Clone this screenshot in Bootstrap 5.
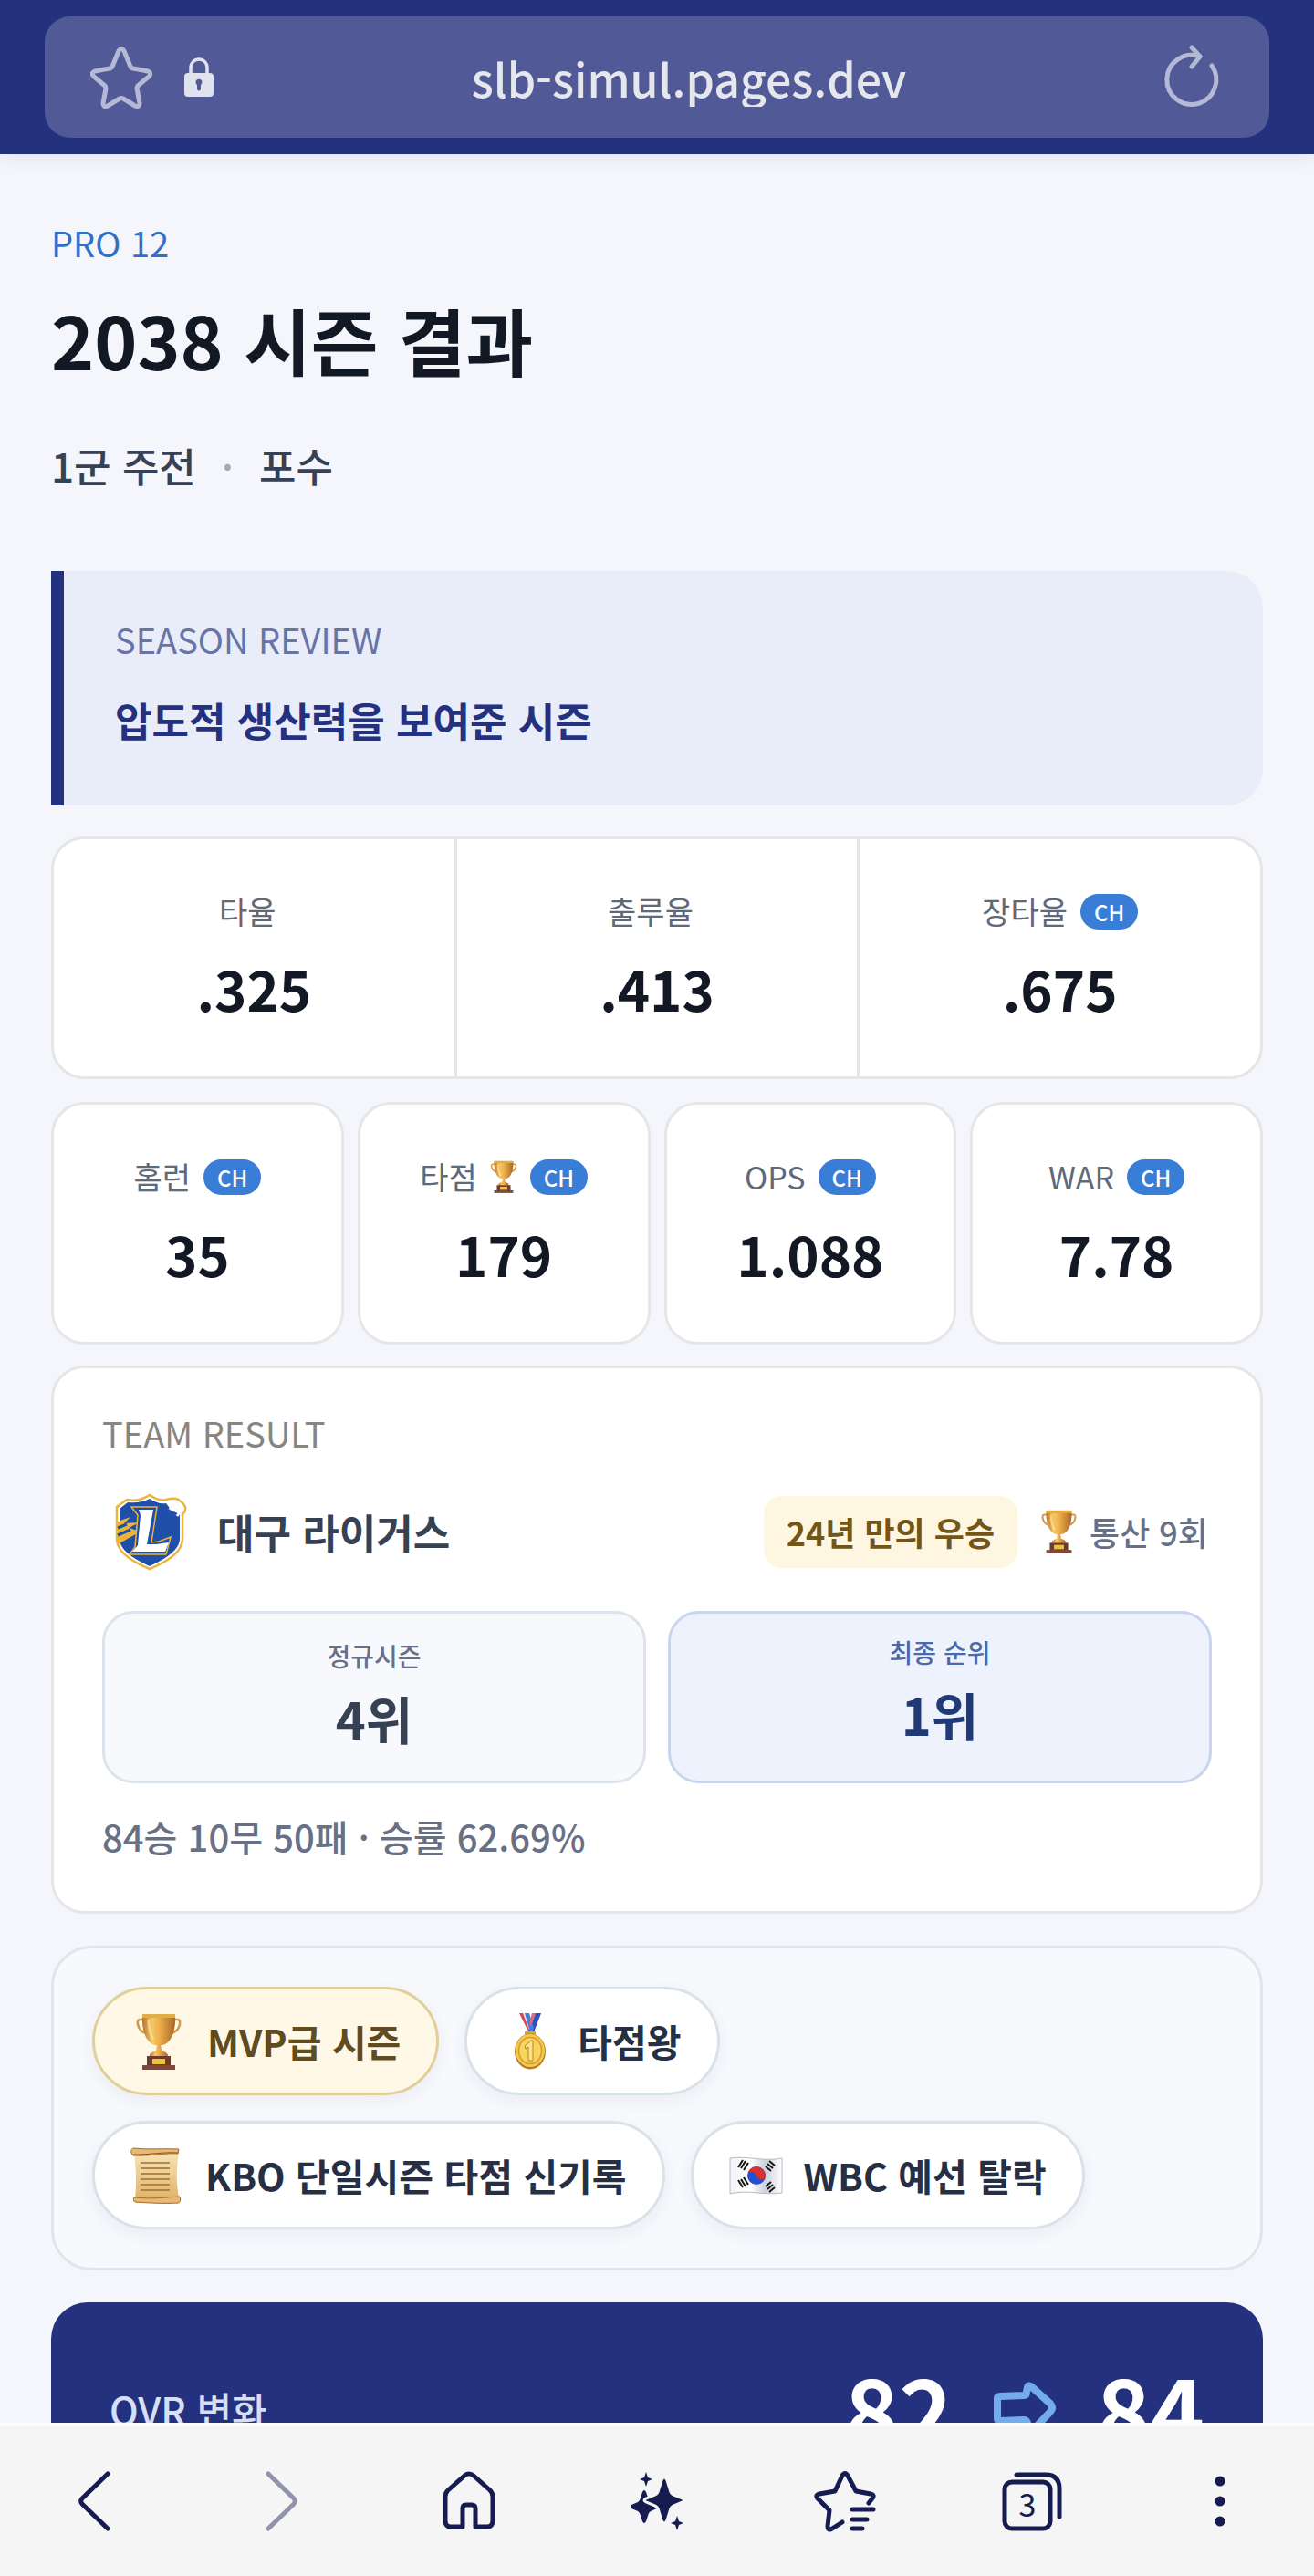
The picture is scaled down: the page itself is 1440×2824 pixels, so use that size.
<!DOCTYPE html>
<html lang="ko">
<head>
<meta charset="utf-8">
<meta name="viewport" content="width=device-width, initial-scale=1">
<title>2038 시즌 결과</title>
<link rel="stylesheet" href="https://cdn.jsdelivr.net/npm/bootstrap@5.3.0/dist/css/bootstrap.min.css">
<style>
:root{--navy:#24317e;--ink:#121824;--edge:#e5e6e7;--soft-edge:#dce3ea}
body{font-family:"Noto Sans CJK KR",sans-serif;background:#f4f6fb;color:var(--ink);overflow:hidden}
svg{display:block;flex:none}
.top-bar{background:var(--navy);padding:18px 49px;box-shadow:0 4px 24px rgba(0,0,0,.07);z-index:2}
.address{background:#515a97;border-radius:28px;height:133px;padding:0 52px 0 50px}
.lock{margin-left:34px}
.address input{background:none;border:0;color:#e6e7ec;font-size:50px;line-height:64px;font-weight:500;text-align:center;min-width:0;outline:0}
.icon-btn{background:none;border:0;padding:0}
.page-main{padding:69px 56px 0;min-height:0}
.kicker{font-size:38px;line-height:56px;color:#2f70c8}
.page-title{font-size:80px;line-height:104px;font-weight:700;margin:25px 0 0}
.role{font-size:44px;line-height:64px;font-weight:500;color:#374154;margin-top:55px;gap:28px}
.role .sep{color:#a3a9b6}
.review{background:#e9edfa;border-left:14px solid var(--navy);border-radius:0 40px 40px 0;padding:47px 56px 58px;margin-top:84px}
.eyebrow{font-size:38px;line-height:56px}
.review .eyebrow{color:#6874a6}
.review-text{font-size:44px;line-height:72px;font-weight:700;color:var(--navy);margin:24px 0 0}
.panel{background:#fff;border:3px solid var(--edge);border-radius:36px}
.trio{margin-top:34px}
.trio>*+*{border-left:3px solid var(--edge)}
.stat{padding:57px 8px 61px;text-align:center;flex:1 1 0;min-width:0}
.stat-label{font-size:34px;line-height:44px;color:#606978;gap:14px}
.ch{background:#387dd6;color:#fff;font-size:24px;line-height:39px;font-weight:500;border-radius:20px;padding:0 15px}
.stat-num{font-size:60px;line-height:72px;font-weight:700;margin-top:26px}
.quad{gap:15px;margin-top:25px}
.team{padding:43px 53px 52px;margin-top:23px}
.team .eyebrow{color:#87857f}
.team-row{margin-top:32px;height:96px}
.team-name{font-size:44px;font-weight:700;color:#374154;margin-left:22px}
.gold-tag{background:#fef6e0;color:#735617;font-size:36px;line-height:79px;font-weight:700;border-radius:20px;padding:0 25px}
.titles{font-size:36px;font-weight:500;color:#687086;gap:12px}
.ranks{gap:24px;margin-top:39px}
.rank{flex:1 1 0;background:#f8f9fd;border:3px solid var(--soft-edge);border-radius:34px;padding:26px 0;text-align:center;height:189px}
.rank-label{font-size:28px;line-height:40px;font-weight:500;color:#687086}
.rank-num{font-size:56px;line-height:72px;font-weight:700;color:#374154;margin-top:12px}
.rank.final{background:#eef2fd;border-color:#c9d5ec;padding-top:22px}
.final .rank-label{color:#4a6aa8}
.final .rank-num{color:#1f3a75}
.record{font-size:40px;line-height:60px;font-weight:500;color:#687086;margin:28px 0 0}
.awards{background:#f8f9fd;border:3px solid #dfe5ea;border-radius:44px;padding:42px;gap:28px;margin-top:35px}
.award{background:#fff;border:3px solid #d9e1e9;border-radius:60px;height:119px;padding:0 39px;gap:22px;font-size:41px;font-weight:700;color:#262f43;box-shadow:0 6px 20px rgba(30,40,80,.06)}
.award.mvp{background:#fff8e7;border-color:#e0cf9a;color:#604c1e}
.ovr{background:var(--navy);border-radius:40px;height:232px;padding:0 64px;margin-top:35px}
.ovr-label{font-size:42px;font-weight:500;color:#d8def5}
.ovr-num{font-size:100px;line-height:120px;font-weight:700;color:#fff;gap:44px}
.bottom-bar{background:#f5f5f5;border-top:4px solid #fcfcfd;height:168px;z-index:2}
.bottom-bar button{flex:1 1 0}
.nav-ink{color:#161c4f}
.nav-off{color:#9193ac}
</style>
</head>
<body>
<svg width="0" height="0" class="position-absolute" aria-hidden="true">
<defs>
<linearGradient id="gold" x1="0" x2="1"><stop offset="0" stop-color="#b8742a"/><stop offset=".3" stop-color="#f6c765"/><stop offset=".5" stop-color="#f0b04c"/><stop offset="1" stop-color="#a8682a"/></linearGradient>
<linearGradient id="paper" x1="0" y1="0" x2="0" y2="1"><stop offset="0" stop-color="#f7e3b4"/><stop offset="1" stop-color="#e2b469"/></linearGradient>
<linearGradient id="flagcloth" x1="0" x2="1"><stop offset="0" stop-color="#f2f3f6"/><stop offset=".4" stop-color="#fff"/><stop offset=".68" stop-color="#ccd2da"/><stop offset="1" stop-color="#fff"/></linearGradient>
<symbol id="trophy" viewBox="0 0 52 62">
<path d="M10 7H5C1 7 2 19 12 22M42 7h5c4 0 3 12-7 15" fill="none" stroke="#d29a4e" stroke-width="2.6"/>
<path d="M8 2h36c1 16-4 31-14 33h-8C12 33 7 18 8 2Z" fill="url(#gold)"/>
<path d="M8 1h36v4H8Z" fill="#e1ad45"/><path d="M15 7c0 10 2 17 5 22" stroke="#ffe3a0" stroke-width="3" fill="none" opacity=".7"/>
<path d="M24 34h4l1 7c5 2 7 3 7 6H16c0-3 2-4 7-6Z" fill="url(#gold)"/>
<path d="M13 47h26v11H13Z" fill="#6d3c2c"/><path d="M8 57h36v5H8Z" fill="#7d4a39"/><path d="M19 50h14v6H19Z" fill="#edc436"/>
</symbol>
<symbol id="chevron" viewBox="0 0 36 68"><path d="M33 4 5 31q-2.500 3 0 6L33 64" fill="none" stroke="currentColor" stroke-width="5" stroke-linecap="round" stroke-linejoin="round"/></symbol>
</defs>
</svg>
<div class="d-flex flex-column vh-100">
<header class="top-bar position-relative flex-shrink-0">
<div class="address d-flex align-items-center">
<button class="icon-btn" aria-label="즐겨찾기"><svg width="68" height="68" viewBox="0 0 68 68" fill="none" stroke="#b5b9d6" stroke-width="5" stroke-linejoin="round"><path d="M31 5Q34 0 37 5L44 22Q45 24 47 24L63 27Q68 29 64 33L52 43Q51 44 51 46L54 62Q54 67 49 65L36 57Q34 56 32 57L19 65Q14 67 14 62L17 46Q17 44 16 43L4 33Q0 29 5 27L21 24Q23 24 24 22Z"/></svg></button>
<svg class="lock" width="34" height="44" viewBox="0 0 34 44"><path d="M8 20v-9a9 9 0 0 1 18 0v9" fill="none" stroke="#e0e2ee" stroke-width="3.500"/><rect x="1" y="17" width="32" height="26" rx="4" fill="#e0e2ee"/><path d="M15 30a3.500 3.500 0 1 1 4 0v5q-2 3-4 0Z" fill="#515a97"/></svg>
<input class="flex-grow-1" type="text" value="slb-simul.pages.dev" aria-label="주소">
<button class="icon-btn" aria-label="새로고침"><svg width="64" height="72" viewBox="0 0 64 72" fill="none" stroke="#b5b9d6" stroke-width="5" stroke-linecap="round" stroke-linejoin="round"><path d="M53 23A27 27 0 1 1 40 13"/><path d="m31 3 9 10-9 11"/></svg></button>
</div>
</header>
<main class="page-main flex-grow-1 overflow-hidden">
<div class="kicker">PRO 12</div>
<h1 class="page-title">2038 시즌 결과</h1>
<div class="role d-flex"><span>1군 주전</span><span class="sep">·</span><span>포수</span></div>
<section class="review">
<div class="eyebrow">SEASON REVIEW</div>
<p class="review-text">압도적 생산력을 보여준 시즌</p>
</section>
<section class="panel trio d-flex">
<div class="stat"><div class="stat-label d-flex justify-content-center align-items-center">타율<span></span></div><div class="stat-num">.325</div></div>
<div class="stat"><div class="stat-label d-flex justify-content-center align-items-center">출루율<span></span></div><div class="stat-num">.413</div></div>
<div class="stat"><div class="stat-label d-flex justify-content-center align-items-center">장타율<span class="ch">CH</span></div><div class="stat-num">.675</div></div>
</section>
<section class="quad d-flex">
<div class="panel stat"><div class="stat-label d-flex justify-content-center align-items-center">홈런<span class="ch">CH</span></div><div class="stat-num">35</div></div>
<div class="panel stat"><div class="stat-label d-flex justify-content-center align-items-center">타점<svg width="30" height="36"><use href="#trophy"/></svg><span class="ch">CH</span></div><div class="stat-num">179</div></div>
<div class="panel stat"><div class="stat-label d-flex justify-content-center align-items-center">OPS<span class="ch">CH</span></div><div class="stat-num">1.088</div></div>
<div class="panel stat"><div class="stat-label d-flex justify-content-center align-items-center">WAR<span class="ch">CH</span></div><div class="stat-num">7.78</div></div>
</section>
<section class="panel team">
<div class="eyebrow">TEAM RESULT</div>
<div class="team-row d-flex align-items-center pe-1">
<svg width="104" height="96" viewBox="0 0 104 96" role="img" aria-label="라이거스">
<path d="M52 8c6 4 12 7 18 5 7-2 13-2 16 2 6 4 7 10 2 14v27c0 13-14 24-36 33C30 80 16 69 16 56V21l11-8c8 2 17 0 25-5Z" fill="#fff" stroke="#ebb53c" stroke-width="2.500"/>
<path d="M52 12c6 4 12 6 18 5l6 8 9 4v27c0 11-13 21-33 30C32 77 19 67 19 56V23l9-7c8 1 16 0 24-4Z" fill="#1f4fa8"/>
<path d="m17 37 14-5-7 7 17-1-12 6 13 4-25 14Z" fill="#ebb53c"/><path d="m17 44 10-4M17 52l14-6" stroke="#1f4fa8" stroke-width="3"/>
<path d="m74 24 5-8 4 1-4 8 6-5 2 4-5 7" fill="none" stroke="#fff" stroke-width="3"/>
<path d="M32 21h28l-6 39 8-1 13-5-5 19H30l6-8 3-35Z" fill="#1f4fa8" stroke="#ebb53c" stroke-width="1.500"/>
<path d="M40 24h16l-7 38h10l14-2-4 10H33l6-7 3-33Z" fill="#fff"/>
</svg>
<span class="team-name">대구 라이거스</span>
<span class="gold-tag ms-auto">24년 만의 우승</span>
<span class="titles d-flex align-items-center ms-4"><svg width="43" height="48"><use href="#trophy"/></svg>통산 9회</span>
</div>
<div class="ranks d-flex">
<div class="rank"><div class="rank-label">정규시즌</div><div class="rank-num">4위</div></div>
<div class="rank final"><div class="rank-label">최종 순위</div><div class="rank-num">1위</div></div>
</div>
<p class="record">84승 10무 50패 · 승률 62.69%</p>
</section>
<section class="awards d-flex flex-wrap">
<div class="award mvp d-flex align-items-center"><svg width="62" height="62"><use href="#trophy"/></svg>MVP급 시즌</div>
<div class="award d-flex align-items-center"><svg width="60" height="62" viewBox="0 0 60 62"><path d="M18 0h6l9 20h-5Z" fill="#d8474d"/><path d="M22 0h4l6 16-2 5Z" fill="#e9edfa"/><path d="M36 0h6L34 21h-6Z" fill="#2a4fc4"/><path d="M24 0h5l5 16-2 5h-2Z" fill="#4a7ce0"/><path d="M32 0h4l-5 14-2-3Z" fill="#dd6a6c"/><path d="M24 20h12v5H24Z" fill="#dba33a"/><ellipse cx="30" cy="42" rx="17" ry="19.500" fill="#b77b28"/><ellipse cx="30" cy="41" rx="16" ry="18" fill="#f4c94a"/><ellipse cx="30" cy="41" rx="12.500" ry="14.500" fill="#f8d55c" stroke="#d69a2f" stroke-width="1.500"/><path d="m24 36 7-6h2v22h-5V37l-3 2Z" fill="#fbe38c" stroke="#b98224"/></svg>타점왕</div>
<div class="award d-flex align-items-center"><svg width="60" height="62" viewBox="0 0 60 62"><path d="M4 6h49c-3 18-3 32 0 50H5c2-18 1-32-1-50Z" fill="url(#paper)"/><path d="M3 1c18 2 34 0 50 1l-1 5C36 6 22 10 3 9 0 7 0 2 3 1Z" fill="#e6b977" stroke="#a86b24"/><path d="M3 8c20 0 33-3 49-2" stroke="#8e5518" fill="none"/><path d="M4 55c20 2 34 0 50-1 1 3 1 5-1 7-18 1-32 0-48-1-2-1-2-3-1-5Z" fill="#e6b977" stroke="#a86b24"/><path d="M11 17h32M11 23h32M11 29h32M11 35h32M11 41h32M11 47h32" stroke="#99703a" stroke-width="1.500"/></svg>KBO 단일시즌 타점 신기록</div>
<div class="award d-flex align-items-center"><svg width="60" height="42" viewBox="0 0 60 42"><path d="M1 2c18-3 36 4 57 0v38c-21 3-37-4-57 1Z" fill="url(#flagcloth)" stroke="#b9bac6"/><circle cx="30" cy="21" r="10" fill="#2450cf"/><path d="M21 17a10 10 0 0 1 19 5c-3 5-8 4-10-1s-7-4-9-4Z" fill="#db2f30"/><g stroke="#161616" stroke-width="2"><path d="m10 12 5-8m-2 9 5-8m-2 10 5-8M10 26l5 8m-2-9 5 8m-2-10 5 8M40 11l6 5m-4-8 6 5m-4-8 6 5M40 33l6 -5m-4 8 6-5m-4 8 6-5"/></g></svg>WBC 예선 탈락</div>
</section>
<section class="ovr d-flex align-items-center justify-content-between">
<span class="ovr-label">OVR 변화</span>
<span class="ovr-num d-flex align-items-center">82<svg width="70" height="60" viewBox="0 0 70 60" fill="none" stroke="#74abec" stroke-width="8" stroke-linejoin="round"><path d="M5 19Q5 17 8 17L34 16Q37 16 37 12L38 7Q39 4 43 7L63 25Q67 30 63 34L44 54Q40 57 39 52L38 46Q37 43 34 43L8 44Q5 44 5 41Z"/></svg>84</span>
</section>
</main>
<nav class="bottom-bar d-flex align-items-center flex-shrink-0" aria-label="브라우저 메뉴">
<button class="icon-btn nav-ink d-flex justify-content-center" aria-label="뒤로"><svg width="36" height="68"><use href="#chevron"/></svg></button>
<button class="icon-btn nav-off d-flex justify-content-center" aria-label="앞으로"><svg width="36" height="68" viewBox="0 0 36 68"><use href="#chevron" transform="matrix(-1 0 0 1 36 0)"/></svg></button>
<button class="icon-btn d-flex justify-content-center" aria-label="홈"><svg width="64" height="68" viewBox="0 0 64 68" fill="none" stroke="#161c4f" stroke-width="5" stroke-linejoin="round"><path d="M25 62H12Q6 62 6 55V29Q6 25 9 22L27 6Q32 2 37 6L55 22Q58 25 58 29V55Q58 62 52 62H39V42Q39 38 35 38H29Q25 38 25 42Z"/></svg></button>
<button class="icon-btn d-flex justify-content-center" aria-label="AI"><svg width="64" height="68" viewBox="0 0 64 68" fill="#161c4f"><path d="M20 2 22 8 27 10 22 12 20 18 18 12 13 10 18 8ZM54 50 56 56 61 58 56 60 54 66 52 60 47 58 52 56ZM16 24Q18 20 20 24L23 33Q24 34 25 35L32 38Q34 40 32 42L25 45Q24 46 23 47L20 56Q18 60 16 56L13 47Q12 46 11 45L4 42Q2 40 4 38L11 35Q12 34 13 33Z"/><path d="M37 11Q40 5 43 11L47 24Q48 26 50 27L60 31Q64 33 60 35L50 39Q48 40 47 42L43 55Q40 61 37 55L33 42Q32 40 30 39L20 35Q16 33 20 31L30 27Q32 26 33 24Z" stroke="#f5f5f5" stroke-width="3"/></svg></button>
<button class="icon-btn d-flex justify-content-center" aria-label="북마크"><svg width="68" height="68" viewBox="0 0 68 68" fill="none" stroke="#161c4f" stroke-width="5" stroke-linecap="round" stroke-linejoin="round"><path d="M60 36 64 31Q67 27 62 26L46 23 37 6Q34 1 31 6L23 23 6 26Q1 27 4 31L17 44 15 61Q15 67 20 64L31 57M42 43H65M42 54H58M42 64H53"/></svg></button>
<button class="icon-btn d-flex justify-content-center" aria-label="탭 3개"><svg width="68" height="68" viewBox="0 0 68 68" fill="none" stroke="#161c4f" stroke-width="5" stroke-linecap="round"><rect x="4" y="13" width="50" height="51" rx="8"/><path d="M17 5H49Q64 5 64 20V51"/><text x="29" y="51" font-size="34" text-anchor="middle" fill="#161c4f" stroke="none">3</text></svg></button>
<button class="icon-btn d-flex justify-content-center" aria-label="더보기"><svg width="20" height="64" viewBox="0 0 20 64" fill="#161c4f"><circle cx="10" cy="10" r="5.500"/><circle cx="10" cy="32" r="5.500"/><circle cx="10" cy="54" r="5.500"/></svg></button>
</nav>
</div>
<script src="https://cdn.jsdelivr.net/npm/bootstrap@5.3.0/dist/js/bootstrap.bundle.min.js"></script>
</body>
</html>
